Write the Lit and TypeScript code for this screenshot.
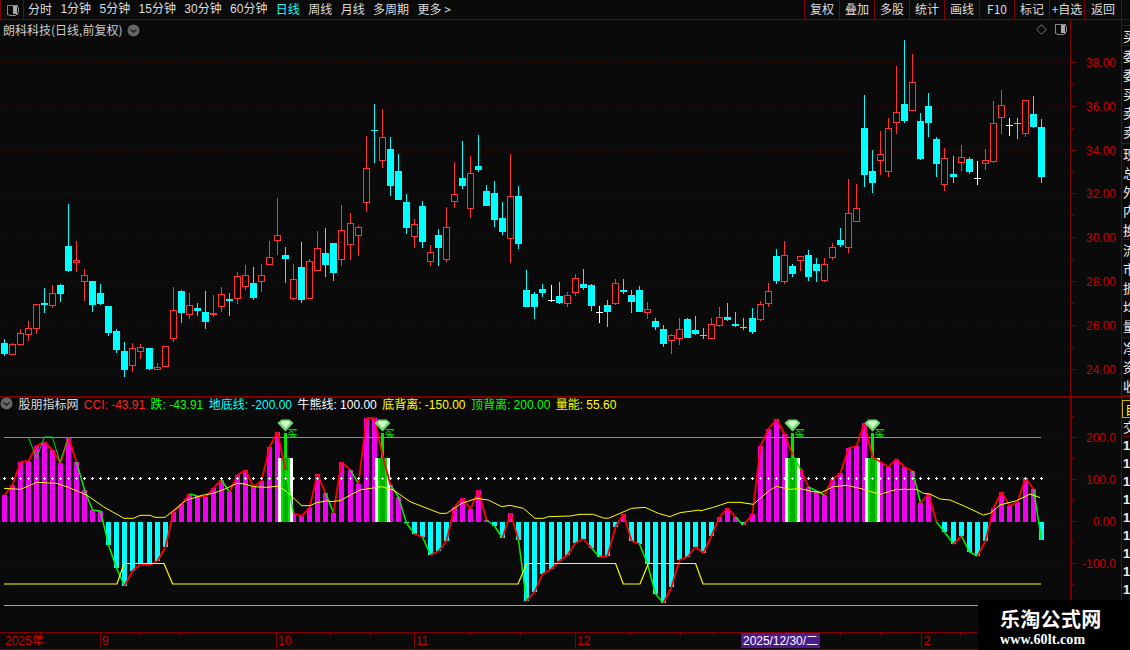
import { LitElement, html, css, svg } from "lit";
import { customElement } from "lit/decorators.js";

const RAW = `c 343 354 339 356|r 344 355 343 355|r 333 345 329 345|r 328 335 321 341|r 304 329 304 334|c 303 305 288 313|r 293 306 285 308|c 285 294 284 302|c 246 271 204 272|r 260 263 241 272|r 275 282 269 301|c 281 305 281 312|c 293 304 284 305|c 306 333 306 336|c 331 350 329 353|c 351 370 342 377|r 348 366 343 372|r 347 352 344 359|c 348 369 348 370|r 367 370 363 370|r 346 367 346 367|r 310 339 287 342|c 291 313 290 323|r 305 315 293 319|c 308 311 303 316|c 312 322 291 329|f 313 315 295 317|r 294 307 287 312|c 299 301 293 316|r 276 299 272 304|r 275 287 265 290|c 283 298 267 300|r 275 282 264 292|r 257 265 241 265|r 235 241 198 255|c 255 259 247 283|r 279 299 264 300|c 267 300 242 303|r 261 299 259 299|r 248 271 231 271|c 253 265 228 277|c 243 273 243 281|r 230 260 205 266|r 223 245 213 260|r 227 236 226 256|r 168 203 136 212|c 130 131 104 163|r 137 161 109 168|c 149 186 137 196|c 171 200 154 200|c 202 228 194 234|r 224 237 219 248|c 206 242 201 248|r 252 262 245 266|c 235 248 229 266|r 227 260 207 262|r 194 202 162 208|c 178 186 141 189|r 173 209 156 218|c 166 170 135 172|c 191 206 185 206|c 193 220 181 227|c 218 232 202 235|r 196 239 154 263|c 196 244 186 249|c 290 307 270 307|c 294 307 292 319|c 289 293 284 297|w 300 301 285 302|c 296 303 282 304|r 295 304 292 307|r 278 293 274 296|c 284 288 269 290|c 285 306 284 311|w 312 313 306 323|c 305 312 300 327|r 283 304 279 305|c 290 292 279 294|c 295 302 290 313|c 290 312 286 312|r 309 313 302 319|c 321 327 318 330|c 329 344 325 347|r 335 341 334 354|r 329 339 318 345|c 319 338 318 338|c 330 334 316 335|c 335 336 328 339|r 324 339 318 339|r 317 326 307 327|c 317 320 303 321|c 324 326 312 327|c 327 328 318 330|c 318 332 308 334|r 304 320 301 321|r 291 304 283 307|c 256 281 249 284|r 255 282 241 284|c 266 274 264 277|r 256 261 256 271|c 255 277 250 281|c 264 271 258 282|r 264 281 258 282|r 247 258 243 260|c 240 245 228 247|r 213 248 179 253|r 208 222 184 222|c 128 175 95 187|c 171 183 150 193|r 154 161 131 175|r 128 172 118 177|r 112 123 66 134|c 104 121 40 123|r 82 111 54 111|c 121 159 113 160|c 106 123 93 137|c 139 164 137 177|r 158 185 148 191|c 174 177 156 183|r 157 163 145 171|c 159 172 157 174|w 178 179 161 185|r 160 164 149 170|r 123 162 101 163|r 105 118 90 134|w 125 126 118 136|c 123 124 118 139|r 100 134 100 137|c 114 127 96 128|c 127 177 119 183`;

const CANDLES = RAW.split("|").map((s) => {
  const p = s.split(" ");
  return { k: p[0], t: +p[1], b: +p[2], wt: +p[3], wb: +p[4] };
});

const VALS = [495,485,462,461,446,442,450,463,437,462,490,510,511,545,568,586,571,564,565,561,547,512,504,494,496,497,488,480,492,475,470,487,481,447,432,470,513,516,508,474,493,513,462,470,484,418,418,455,485,497,523,534,537,555,551,541,507,498,509,490,520,526,538,513,540,601,592,574,569,561,555,543,539,548,557,556,527,514,541,544,564,594,603,587,560,557,547,553,536,517,508,517,525,514,446,429,419,434,455,469,487,491,495,479,473,448,446,423,457,462,467,459,467,471,503,494,522,532,544,536,552,556,541,508,492,506,502,478,489,540];
const SIGNALS = [35, 47, 98, 108];
const GREEN = new Set([9,10,11,12,13,14,23,27,35,40,43,48,49,50,52,60,61,64,73,79,80,81,91,98,100,101,113,116,117,119,120,128]);

const X = (i: number) => Math.floor(4.3 + i * 8.04);
const pts = (a: number[][], x0: number, y0: number) =>
  a.map((p) => `${x0 + p[0] / 3},${y0 + p[1] / 3}`).join(" ");

const MA = [
  pts([[12,235],[62,238],[110,217],[170,220],[205,232],[260,255],[310,290],[372,325],[400,325],[420,316],[450,316],[465,322],[495,322],[560,270],[610,255],[640,250],[680,235],[710,220],[735,222],[760,230],[800,232],[835,228],[860,245],[905,287],[930,287],[950,278],[985,272]], 0, 410),
  pts([[0,275],[30,272],[90,240],[155,230],[190,240],[240,275],[330,310],[350,310],[395,280],[440,265],[475,270],[515,290],[540,286],[580,295],[615,325],[640,325],[655,320],[720,318],[750,313],[790,313],[820,324],[835,325],[870,310],[905,295],[945,292],[985,310],[1020,320],[1050,308],[1110,300]], 330, 410),
  pts([[0,333],[40,322],[85,307],[120,307],[160,313],[180,295],[210,270],[230,259],[270,268],[300,266],[340,275],[365,277],[400,260],[440,256],[480,265],[540,283],[590,268],[650,268],[670,280],[690,282],[720,297],[750,300],[790,317],[850,345],[870,340],[900,315],[950,302],[990,282],[1020,293]], 700, 400),
].join(" ");

const FLOOR = "4,584 117,584 124,563.5 164,563.5 172.6,584 518,584 526.6,563.5 615.6,563.5 623.3,584 640,584 648.3,563.5 695.6,563.5 703,584 1041,584";

const PRICE_GRID = [[62,"38.00"],[106,"36.00"],[150,"34.00"],[193,"32.00"],[237,"30.00"],[281,"28.00"],[325,"26.00"],[369,"24.00"]] as [number,string][];
const IND_GRID = [[437,"200.0"],[479,"100.0"],[521,"0.00"],[563,"-100.0"]] as [number,string][];
const SIDE_A = ["委","委","买","卖","卖"];
const SIDE_B = ["现","总","外","内","换"];
const SIDE_C = ["流","市","振","均","量"];
const SIDE_D = ["净","资","收"];

@customElement("app-root")
export class AppRoot extends LitElement {
  static styles = css`
    :host { display: block; width: 1130px; height: 650px; position: relative; overflow: hidden; background: #0a0a0a; color: #ddd;
      font: 12px "Noto Sans CJK SC", "Liberation Sans", sans-serif; }
    svg { display: block; }
    .top { display: flex; height: 19px; border-bottom: 1px solid #800000; line-height: 18px; }
    .toggle { width: 22px; border-left: 1px solid #800000; border-right: 1px solid #800000; display: flex; align-items: center; justify-content: center; }
    .nav { display: flex; gap: 8.4px; padding-left: 4px; flex: 1; white-space: nowrap; }
    .nav .on { color: #00ffff; }
    .nav .lat { font-family: "Liberation Sans", "Noto Sans CJK SC", sans-serif; }
    .btns { display: flex; }
    .btns div { width: 34px; border-left: 1px solid #800000; text-align: center; white-space: nowrap; overflow: hidden; }
    .btns div:last-child { width: 36px; border-right: 1px solid #800000; }
    .rest { width: 8px; }
    .main { display: flex; height: 630px; }
    .charts { width: 1121px; border-right: 1px solid #800000; flex: none; }
    .panel { position: relative; }
    .price { height: 376px; }
    .ind { height: 234px; border-top: 2px solid #800000; }
    .head { position: absolute; left: 3px; top: 1px; display: flex; align-items: center; gap: 5px; line-height: 18px; color: #ccc; }
    .tools { position: absolute; left: 1036px; top: 3px; display: flex; gap: 7px; align-items: center; }
    .legend { position: absolute; left: 0; top: -1px; display: flex; gap: 5.4px; line-height: 16px; white-space: nowrap; color: #ddd; }
    .legend span { font-family: "Liberation Sans", "Noto Sans CJK SC", sans-serif; }
    .r { color: #ff2020; } .g { color: #00ff00; } .cy { color: #00ffff; } .wh { color: #fff; } .y { color: #ffff00; }
    .axis { height: 16px; border-top: 1px solid #800000; border-bottom: 1px solid #800000; }
    .tabs { display: flex; height: 2px; overflow: hidden; font-size: 12px; line-height: 12px; }
    .tabs span { padding-left: 4px; }
    .side { flex: 1; overflow: hidden; display: flex; flex-direction: column; color: #eee; font-size: 13px; line-height: 19px; }
    .sec { border-bottom: 1px solid #800000; padding-left: 1px; overflow: hidden; white-space: nowrap; }
    .s0 { height: 5px; } .s1 { height: 19px; } .s2 { height: 97px; } .s3 { height: 95px; } .s4 { height: 97px; } .s5 { height: 57px; border-bottom-width: 2px; }
    .auto { height: 16px; margin-top: 3px; padding-left: 2px; border: 1px solid #d0b000; border-right: 0; color: #ffff00; line-height: 16px; }
    .list { padding-left: 1px; line-height: 18px; font-family: "Liberation Sans", sans-serif; font-weight: 700; }
    .list div:first-child { font-family: "Noto Sans CJK SC", sans-serif; font-weight: 400; border-bottom: 1px solid #800000; }
    .mark { position: absolute; right: 0; bottom: 0; width: 130px; height: 50px; padding-left: 22px; background: #000; color: #fff; }
    .mark b { display: block; font: 700 20px/22px "Noto Sans CJK SC", sans-serif; letter-spacing: 0.3px; margin-top: 8px; }
    .mark i { display: block; font: 700 14px/14px "Liberation Serif", serif; font-style: normal; letter-spacing: 0.1px; margin-top: 3px; }
  `;

  private toggleIcon() {
    return svg`<rect x="1" y="1" width="11" height="10" rx="2" fill="none" stroke="#888"/><rect x="7" y="2" width="4" height="8" fill="#aaa"/>`;
  }

  private roundArrow(size = 13) {
    return html`<svg width=${size} height=${size} viewBox="0 0 13 13"><circle cx="6.5" cy="6.5" r="6" fill="#666"/><path d="M3.5 5.5l3 2.5 3-2.5" fill="none" stroke="#222" stroke-width="1.4"/></svg>`;
  }

  private priceChart() {
    return html`<svg width="1120" height="376" viewBox="0 20 1120 376" shape-rendering="crispEdges">
      <line x1="1070.5" y1="20" x2="1070.5" y2="396" stroke="#800000"/>
      ${PRICE_GRID.map(([y, t], n) => svg`
        <line x1="0" y1=${y + 0.5} x2="1066" y2=${y + 0.5} stroke="#520a0a" stroke-dasharray="1 5"/>
        <rect x="1071" y=${y} width="5" height="1" fill="#800000"/>
        ${n < 7 ? svg`<rect x="1071" y=${y + 22} width="3" height="1" fill="#800000"/>` : ""}
        <text x="1116" y=${y + 5} text-anchor="end" fill="#c80000" font-family="Liberation Sans" font-size="12" shape-rendering="auto">${t}</text>`)}
      ${CANDLES.map((c, i) => {
        const x = X(i);
        const col = c.k === "c" ? "#00ffff" : c.k === "w" ? "#ffffff" : "#ff3333";
        if (c.k === "r") {
          return svg`<rect x=${x} y=${c.wt} width="1" height=${c.wb - c.wt} fill=${col}/>
            <rect x=${x - 2.5} y=${c.t + 0.5} width="6" height=${c.b - c.t - 1} fill="#0a0a0a" stroke=${col}/>`;
        }
        if (c.k === "w") {
          return svg`<rect x=${x} y=${c.wt} width="1" height=${c.wb - c.wt} fill=${col}/>
            <rect x=${x - 3} y=${c.t} width="7" height="1" fill=${col}/>`;
        }
        return svg`<rect x=${x} y=${c.wt} width="1" height=${c.wb - c.wt} fill=${col}/>
          <rect x=${x - 3} y=${c.t} width="7" height=${c.b - c.t} fill=${col}/>`;
      })}
    </svg>`;
  }

  private indicatorChart() {
    const dots = Array.from({ length: 130 }, (_, i) => X(i) - 1);
    return html`<svg width="1120" height="233" viewBox="0 398 1120 233">
      <g shape-rendering="crispEdges">
        <line x1="1070.5" y1="398" x2="1070.5" y2="631" stroke="#800000" stroke-width="2"/>
        ${IND_GRID.map(([y, t]) => svg`
          <line x1="0" y1=${y + 0.5} x2="1066" y2=${y + 0.5} stroke="#520a0a" stroke-dasharray="1 5"/>
          <rect x="1071" y=${y} width="6" height="1" fill="#800000"/>
          <rect x="1071" y=${y + 21} width="3" height="1" fill="#800000"/>
          <text x="1116" y=${y + 5} text-anchor="end" fill="#c80000" font-family="Liberation Sans" font-size="12" shape-rendering="auto">${t}</text>`)}
        <rect x="1071" y="416" width="3" height="1" fill="#800000"/>
        ${VALS.map((v, i) => {
          if (SIGNALS.includes(i)) return "";
          const x = X(i) - 2;
          return v < 521
            ? svg`<rect x=${x} y=${v} width="5" height=${522 - v} fill="#f000f0"/>`
            : svg`<rect x=${x} y="522" width="5" height=${v - 522} fill="#00ffff"/>`;
        })}
        ${SIGNALS.map((i) => {
          const x = X(i);
          return svg`<rect x=${x - 7} y="458" width="15" height="64" fill="#ffffff"/>
            <rect x=${x - 4} y="458" width="9" height="64" fill="#00e400"/>
            <rect x=${x - 2} y="458" width="5" height="64" fill="#00b000"/>
            <rect x=${x - 1} y="433" width="3" height="25" fill="#00e400"/>`;
        })}
        <rect x="4" y="437" width="1037" height="1" fill="#2fd51f"/>
        <rect x="4" y="605" width="974" height="1" fill="#27d6dc"/>
      </g>
      ${VALS.slice(0, -1).map((v, i) => svg`
        <line x1=${X(i) + 0.5} y1=${v} x2=${X(i + 1) + 0.5} y2=${VALS[i + 1]}
          stroke=${GREEN.has(i) ? "#00f000" : "#ff0000"} stroke-width=${GREEN.has(i) ? 1.5 : 1.8}/>`)}
      <polyline points="28.3,437 36.6,458.3 44.3,437 52.3,437 60,462 68.7,437" fill="none" stroke="#00e000"/>
      <polyline points=${FLOOR} fill="none" stroke="#ffff00" stroke-width="1.2"/>
      <polyline points=${MA} fill="none" stroke="#ffff00"/>
      <g shape-rendering="crispEdges" fill="#fff">
        ${dots.map((x) => svg`<rect x=${x} y="478" width="3" height="1"/><rect x=${x + 1} y="477" width="1" height="3"/>`)}
      </g>
      ${SIGNALS.map((i) => {
        const x = X(i) + 0.5;
        return svg`<polygon points="${x - 8},${423} ${x - 4},${419.5} ${x + 4},${419.5} ${x + 8},${423} ${x},${431.5}" fill="#72dc72"/>
          <polygon points="${x - 5},${422.5} ${x - 2},${421} ${x + 3},${421} ${x + 5},${422.5} ${x},${428}" fill="#d4f8cc"/>
          <text x=${x + 2} y="436.5" fill="#00f000" font-family="Noto Sans CJK SC" font-size="10">买</text>`;
      })}
    </svg>`;
  }

  private timeAxis() {
    const ticks = [40, 100, 140, 180, 276, 330, 370, 414, 470, 520, 575, 630, 680, 713, 760, 800, 840, 880, 921, 960, 1000, 1040];
    const labels = [[5, "2025年"], [102, "9"], [278, "10"], [416, "11"], [577, "12"], [924, "2"]] as [number, string][];
    return html`<div class="axis"><svg width="1120" height="15" viewBox="0 631 1120 15">
      <g shape-rendering="crispEdges">
        ${ticks.map((x) => svg`<rect x=${x} y="631" width="1" height="3" fill="#800000"/>`)}
        ${[100, 276, 414, 575, 921].map((x) => svg`<rect x=${x} y="631" width="1" height="15" fill="#800000"/>`)}
        <rect x="1070" y="631" width="2" height="15" fill="#800000"/>
        <rect x="741" y="631" width="79" height="15" fill="#4b1a8c"/>
      </g>
      ${labels.map(([x, t]) => svg`<text x=${x} y="643" fill="#c80000" font-family="Liberation Sans, Noto Sans CJK SC" font-size="12">${t}</text>`)}
      <text x="743" y="643" fill="#fff" font-family="Liberation Sans, Noto Sans CJK SC" font-size="12" textLength="75">2025/12/30/二</text>
    </svg></div>`;
  }

  render() {
    return html`
      <div class="top">
        <div class="toggle"><svg width="13" height="12" viewBox="0 0 13 12" shape-rendering="crispEdges">${this.toggleIcon()}</svg></div>
        <div class="nav">
          <span>分时</span><span class="lat">1分钟</span><span class="lat">5分钟</span><span class="lat">15分钟</span><span class="lat">30分钟</span><span class="lat">60分钟</span>
          <span class="on">日线</span><span>周线</span><span>月线</span><span>多周期</span><span>更多 &gt;</span>
        </div>
        <div class="btns">
          ${["复权","叠加","多股","统计","画线","F10","标记","+自选","返回"].map((t) => html`<div>${t}</div>`)}
        </div>
        <div class="rest"></div>
      </div>
      <div class="main">
        <div class="charts">
          <div class="panel price">
            ${this.priceChart()}
            <div class="head"><span>朗科科技(日线,前复权)</span>${this.roundArrow()}</div>
            <div class="tools">
              <svg width="11" height="11" viewBox="0 0 11 11"><path d="M5.5 .7l4.8 4.8-4.8 4.8L.7 5.5z" fill="none" stroke="#777"/></svg>
              <svg width="13" height="12" viewBox="0 0 13 12" shape-rendering="crispEdges">${this.toggleIcon()}</svg>
            </div>
          </div>
          <div class="panel ind">
            ${this.indicatorChart()}
            <div class="legend">
              ${this.roundArrow()}
              <span>股朋指标网</span>
              <span class="r">CCI: -43.91</span>
              <span class="g">跌: -43.91</span>
              <span class="cy">地底线: -200.00</span>
              <span class="wh">牛熊线: 100.00</span>
              <span class="y">底背离: -150.00</span>
              <span class="g">顶背离: 200.00</span>
              <span class="y">量能: 55.60</span>
            </div>
          </div>
          ${this.timeAxis()}
          <div class="tabs"><span>指标</span><span class="cy">选择</span></div>
        </div>
        <div class="side">
          <div class="sec s0"></div>
          <div class="sec s1">买</div>
          <div class="sec s2">${SIDE_A.map((t) => html`<div>${t}</div>`)}</div>
          <div class="sec s3">${SIDE_B.map((t) => html`<div>${t}</div>`)}</div>
          <div class="sec s4">${SIDE_C.map((t) => html`<div>${t}</div>`)}</div>
          <div class="sec s5">${SIDE_D.map((t) => html`<div>${t}</div>`)}</div>
          <div class="auto">自</div>
          <div class="list"><div>交</div>${[1,2,3,4,5,6,7,8,9].map(() => html`<div>1</div>`)}</div>
        </div>
      </div>
      <div class="mark"><b>乐淘公式网</b><i>www.60lt.com</i></div>
    `;
  }
}
